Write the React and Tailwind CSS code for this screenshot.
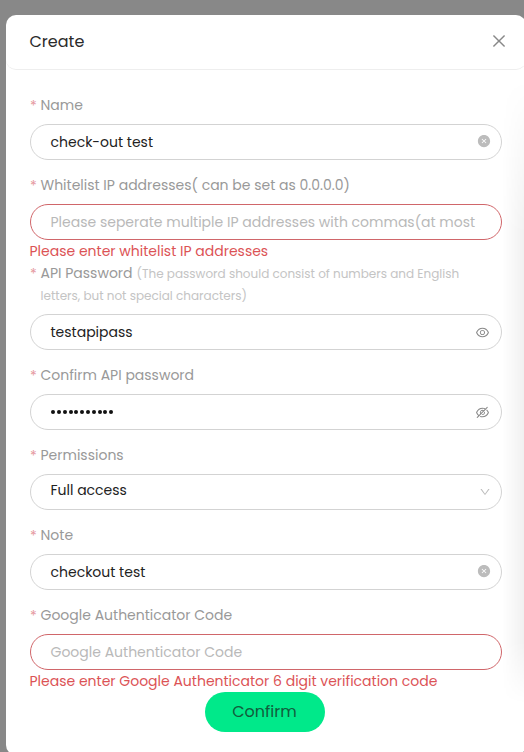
import {
  AiFillCloseCircle,
  AiOutlineClose,
  AiOutlineDown,
  AiOutlineEye,
  AiOutlineEyeInvisible,
} from "react-icons/ai";

function Field({ label, hint, error, value, valueClass = "", placeholder, icon }) {
  return (
    <div className={error ? "" : "pb-3.5"}>
      <div className="mb-2 flex text-sm leading-[22px] text-[#999]">
        <span className="h-[22px] w-[10.5px] shrink-0 text-sm leading-6 text-[#e59aa0]">*</span>
        <div className="whitespace-nowrap">
          <span>{label}</span>
          {hint}
        </div>
      </div>
      <div
        className={`flex h-9 w-[472px] items-center justify-between rounded-full border pr-2.5 pl-[19.5px] text-sm ${
          error ? "border-[#d0666a]" : "border-[#d3d3d3]"
        } ${placeholder ? "text-[#b9b9b9]" : "text-[#222]"}`}
      >
        <span className={`whitespace-nowrap ${valueClass}`}>{value || placeholder}</span>
        {icon}
      </div>
      {error && (
        <div className="-ml-[0.5px] text-sm leading-[22px] whitespace-nowrap text-[#dc5356]">{error}</div>
      )}
    </div>
  );
}

export default function App() {
  return (
    <div className="h-[752px] w-[524px] overflow-hidden bg-[#888] pt-[15px] pl-1.5 font-[Poppins,Inter,sans-serif]">
      <div className="relative h-[740px] w-[520px] overflow-hidden rounded-[10px] bg-white">
        <header className="flex h-[55px] items-center justify-between rounded-[10px] border-b border-[#eee] pr-[18px] pl-[23.5px]">
          <h1 className="text-base text-[#2b2b2b]">Create</h1>
          <AiOutlineClose className="mb-0.5 size-[18px] text-[#888]" />
        </header>
        <main className="px-6 pt-6">
          <Field
            label="Name"
            value="check-out test"
            icon={<AiFillCloseCircle className="mb-0.5 size-3.5 text-[#bcbcbc]" />}
          />
          <Field
            label="Whitelist IP addresses( can be set as 0.0.0.0)"
            placeholder="Please seperate multiple IP addresses with commas(at most"
            error="Please enter whitelist IP addresses"
          />
          <Field
            label="API Password"
            hint={
              <span className="text-xs text-[#c4c4c4]">
                <span className="ml-1">(The password should consist of numbers and English</span>
                <br />
                <span>letters, but not special characters)</span>
              </span>
            }
            value="testapipass"
            icon={<AiOutlineEye className="mr-px size-[15px] text-[#888]" />}
          />
          <Field
            label="Confirm API password"
            value={
              <span className="flex gap-[1.8px] pl-[0.8px]">
                {Array.from({ length: 11 }, (_, i) => (
                  <span key={i} className="size-1 rounded-full bg-[#111]" />
                ))}
              </span>
            }
            icon={<AiOutlineEyeInvisible className="mr-px size-[15px] text-[#888]" />}
          />
          <Field
            label="Permissions"
            value="Full access"
            valueClass="mb-1"
            icon={<AiOutlineDown className="size-3 text-[#bbb]" />}
          />
          <Field
            label="Note"
            value="checkout test"
            icon={<AiFillCloseCircle className="mb-0.5 size-3.5 text-[#bcbcbc]" />}
          />
          <Field
            label="Google Authenticator Code"
            placeholder="Google Authenticator Code"
            error="Please enter Google Authenticator 6 digit verification code"
          />
          <button className="ml-[175px] block h-10 w-[120px] rounded-full bg-[#00e98a] pr-px text-base text-[#125c3c]">
            Confirm
          </button>
        </main>
        <div className="pointer-events-none absolute top-16 right-0 h-[625px] w-6 bg-linear-to-r from-transparent to-black/6 mask-t-from-75% mask-b-from-90%" />
      </div>
    </div>
  );
}
